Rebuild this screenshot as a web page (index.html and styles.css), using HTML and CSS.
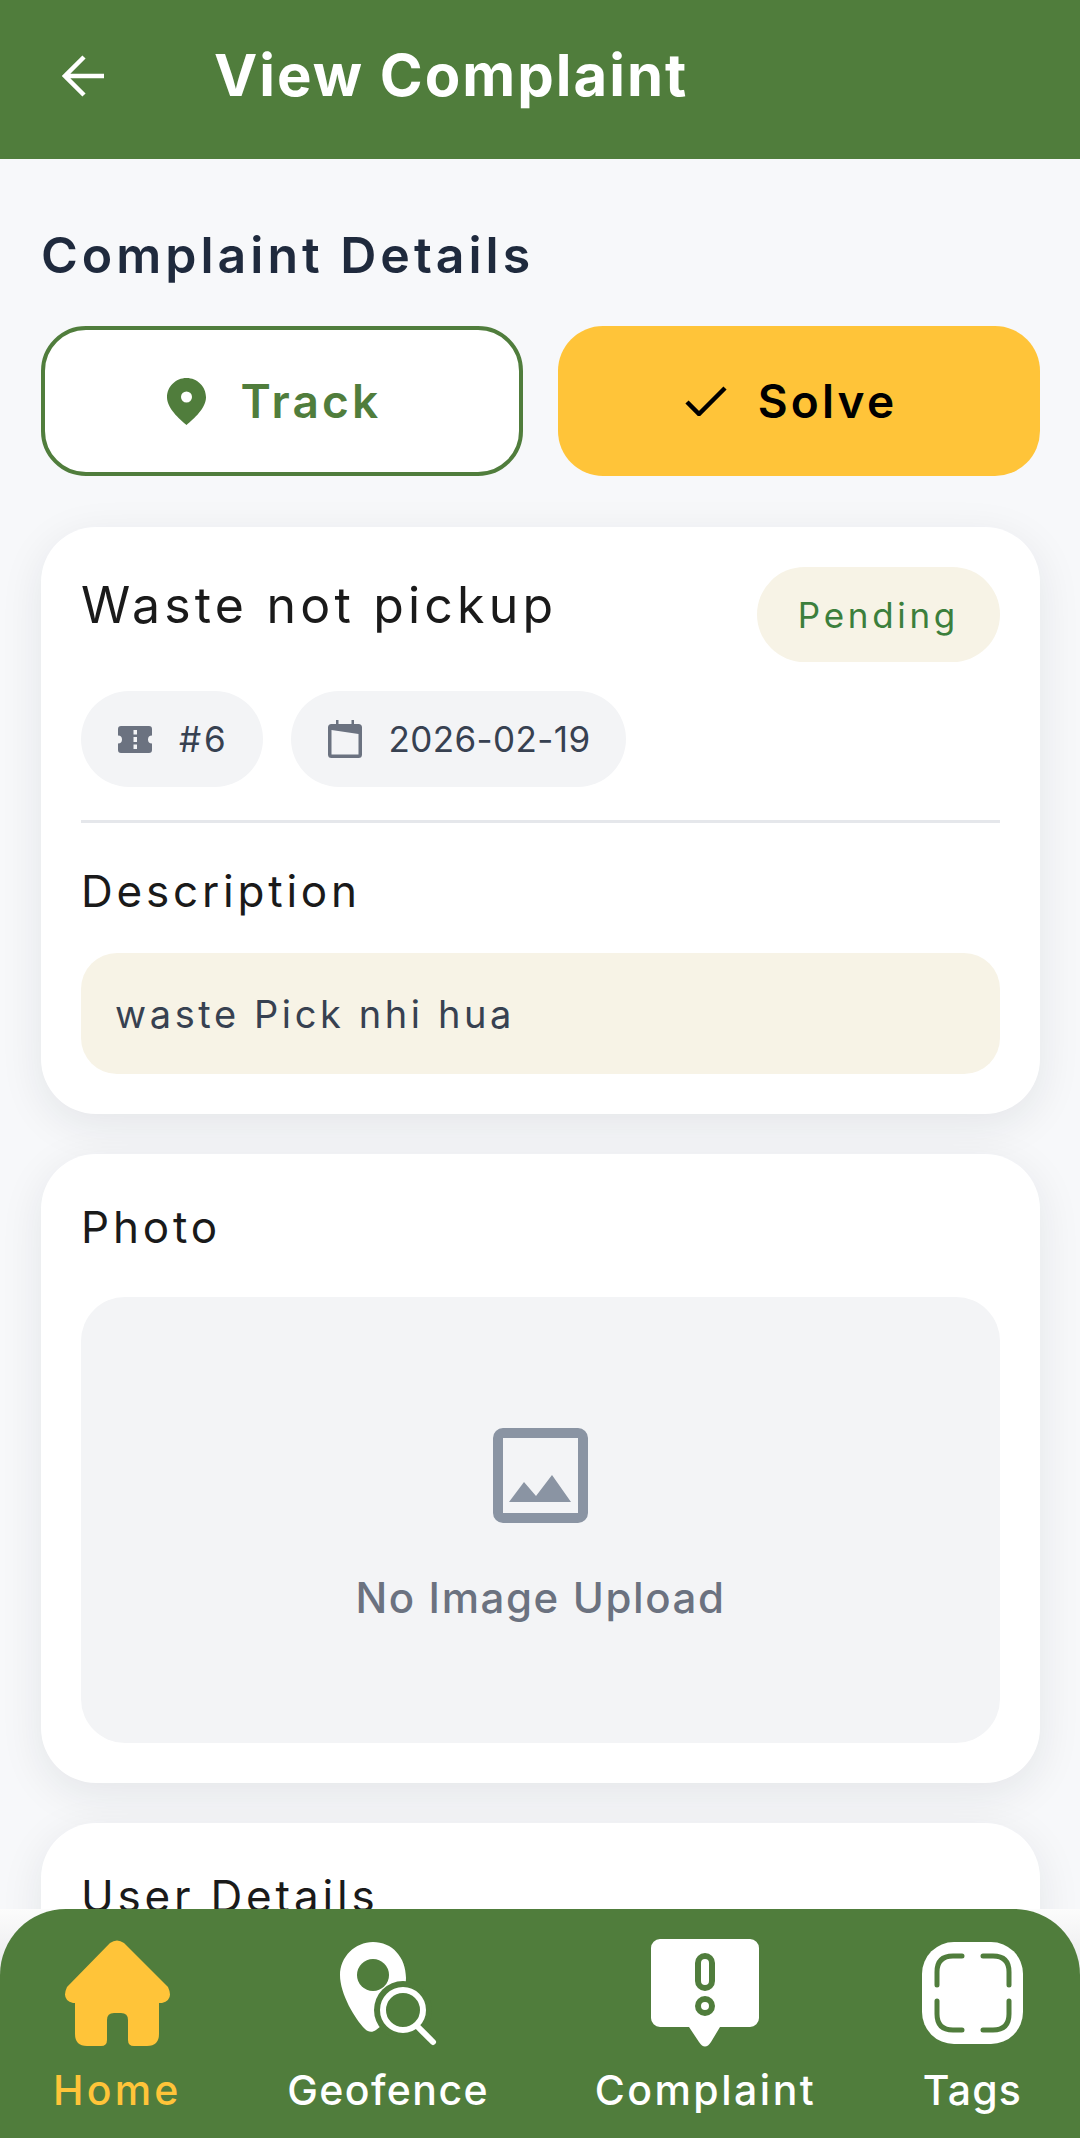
FILE: index.html
```html
<!DOCTYPE html>
<html lang="en">
<head>
<meta charset="utf-8">
<title>View Complaint</title>
<link rel="stylesheet" href="styles.css">
</head>
<body>
<div class="screen">
  <header class="appbar">
    <svg class="back" viewBox="0 0 44 42"><path d="M42 21H3M22 2 3 21l19 19" fill="none" stroke="#fff" stroke-width="4.500"/></svg>
    <h1 class="appbar-title">View Complaint</h1>
  </header>
  <main class="content">
    <h2 class="section-title">Complaint Details</h2>
    <div class="actions">
      <button class="btn btn-track">
        <svg class="btn-pin" viewBox="0 0 39 47"><path fill-rule="evenodd" d="M19.5 0C8.7 0 0 8.6 0 19.3 0 30 12 41 19.5 47 27 41 39 30 39 19.3 39 8.6 30.3 0 19.5 0Zm0 24.500a5.500 5.500 0 1 1 0-11 5.500 5.500 0 0 1 0 11Z" fill="#507d3c"/></svg>
        <span class="btn-text">Track</span>
      </button>
      <button class="btn btn-solve">
        <svg class="btn-check" viewBox="0 0 42 30"><path d="M2 16 14 28 40 2" fill="none" stroke="#000" stroke-width="4.500"/></svg>
        <span class="btn-text">Solve</span>
      </button>
    </div>

    <section class="card">
      <div class="card-top">
        <h3 class="complaint-name">Waste not pickup</h3>
        <span class="status">Pending</span>
      </div>
      <div class="chips">
        <div class="chip">
          <svg class="chip-ticket" viewBox="0 0 34 27"><path fill-rule="evenodd" d="M3 0h28a3 3 0 0 1 3 3v6.500a4 4 0 0 0 0 8V24a3 3 0 0 1-3 3H3a3 3 0 0 1-3-3v-6.500a4 4 0 0 0 0-8V3a3 3 0 0 1 3-3Zm12.500 4v4.500h3.500V4Zm0 7v5h3.500v-5Zm0 7.500V23h3.500v-4.500Z" fill="#6b7280"/></svg>
          <span class="chip-text">#6</span>
        </div>
        <div class="chip">
          <svg class="chip-cal" viewBox="0 0 34 38"><path fill-rule="evenodd" d="M8 0h2.500v4h13V0H26v4h4.500A3.500 3.500 0 0 1 34 7.500V34.500a3.500 3.500 0 0 1-3.500 3.500h-27A3.500 3.500 0 0 1 0 34.500V7.500A3.500 3.500 0 0 1 3.500 4H8Zm-4.500 10V34.500h27V14Z" fill="#6b7280"/></svg>
          <span class="chip-text chip-date">2026-02-19</span>
        </div>
      </div>
      <div class="divider"></div>
      <h3 class="label label-desc">Description</h3>
      <div class="desc-box">waste Pick nhi hua</div>
    </section>

    <section class="card">
      <h3 class="label">Photo</h3>
      <div class="photo">
        <svg class="photo-icon" viewBox="0 0 95 95"><rect x="5" y="5" width="85" height="85" rx="5" fill="none" stroke="#8a94a3" stroke-width="10"/><path d="M16 74 31 54 43 68 59 47 78 74Z" fill="#8a94a3"/></svg>
        <p class="photo-text">No Image Upload</p>
      </div>
    </section>

    <section class="card">
      <h3 class="label">User Details</h3>
    </section>
  </main>

  <div class="nav-wrap">
    <nav class="nav">
      <div class="nav-item nav-active">
        <svg class="nav-icon" width="107" height="106" viewBox="0 0 107 106"><path d="M46 3Q53-2 60 3L104 47Q110 60 98 63H95V94Q95 106 83 106H70Q64 106 64 100V80Q64 73 57 73H50Q43 73 43 80V100Q43 106 37 106H23Q11 106 11 94V63H9Q-3 60 3 47Z" fill="#ffc439"/></svg>
        <span class="nav-label label-home">Home</span>
      </div>
      <div class="nav-item">
        <svg class="nav-icon" width="97" height="102" viewBox="0 0 97 102"><path d="M33 0C52 0 66 15 66 36 66 60 44 83 36 88 32 91 28 90 25 87 15 77 0 52 0 33 0 15 15 0 33 0Z" fill="#fff"/><circle cx="33" cy="33" r="16" fill="#507d3c"/><circle cx="63" cy="68" r="29" fill="#507d3c"/><circle cx="63" cy="68" r="20" fill="none" stroke="#fff" stroke-width="6"/><path d="M78 85 93 100" stroke="#fff" stroke-width="6" stroke-linecap="round"/></svg>
        <span class="nav-label label-geo">Geofence</span>
      </div>
      <div class="nav-item">
        <svg class="nav-icon" width="108" height="108" viewBox="0 0 108 108"><path d="M9 0H99A9 9 0 0 1 108 9V79A9 9 0 0 1 99 88H69L60 103Q54 112 48 103L38 88H9A9 9 0 0 1 0 79V9A9 9 0 0 1 9 0Z" fill="#fff"/><rect x="47" y="17" width="14" height="32" rx="7" fill="#fff" stroke="#507d3c" stroke-width="6"/><circle cx="54" cy="67" r="7" fill="#fff" stroke="#507d3c" stroke-width="6"/></svg>
        <span class="nav-label label-complaint">Complaint</span>
      </div>
      <div class="nav-item">
        <svg class="nav-icon" width="101" height="102" viewBox="0 0 101 102"><rect width="101" height="102" rx="32" fill="#fff"/><path d="M15 43V30Q15 14 31 14H40M61 14H71Q87 14 87 30V43M15 59V72Q15 88 31 88H40M61 88H71Q87 88 87 72V59" fill="none" stroke="#507d3c" stroke-width="5" stroke-linecap="round"/></svg>
        <span class="nav-label label-tags">Tags</span>
      </div>
    </nav>
  </div>
</div>
</body>
</html>
```
FILE: styles.css
```css
* { box-sizing: border-box; }
html, body { margin: 0; padding: 0; }
body { font-family: Inter, "Noto Sans", sans-serif; background: #f7f8fa; }
h1, h2, h3, p { margin: 0; font-weight: 500; }

.screen { position: relative; width: 1080px; height: 2138px; overflow: hidden; background: #f7f8fa; }

.appbar { height: 159px; background: #507d3c; display: flex; align-items: flex-start; }
.back { width: 44px; height: 42px; margin: 55px 0 0 62px; flex: none; }
.appbar-title { margin: 38px 0 0 108px; font-size: 58px; line-height: 74px; font-weight: 700; color: #fff; letter-spacing: 2px; }

.content { padding: 0 40px 0 41px; }
.section-title { margin-top: 66px; font-size: 50px; line-height: 60px; font-weight: 600; color: #1f2a3d; letter-spacing: 4px; }

.actions { display: grid; grid-template-columns: 1fr 1fr; gap: 35px; margin-top: 41px; }
.btn { height: 150px; border-radius: 45px; border: 0; display: flex; align-items: center; justify-content: center; padding: 0 16px 0 0; font-family: inherit; }
.btn-track { background: #fff; border: 4px solid #507d3c; color: #507d3c; }
.btn-solve { background: #ffc439; color: #000; }
.btn-text { font-size: 46px; line-height: 60px; font-weight: 600; letter-spacing: 3.2px; }
.btn-pin { width: 39px; height: 47px; margin-right: 35px; }
.btn-check { width: 42px; height: 30px; margin-right: 31px; }

.card { background: #fff; border-radius: 55px; padding: 40px; margin-top: 40px; box-shadow: 0 11px 44px rgba(20, 30, 45, 0.085); }
.actions + .card { margin-top: 51px; }
.card-top { display: flex; justify-content: space-between; align-items: flex-start; }
.complaint-name { font-size: 50px; line-height: 76px; font-weight: 400; color: #1a1a1a; letter-spacing: 4.200px; }
.status { height: 95px; padding: 0 41px; border-radius: 48px; background: #f7f3e6; color: #3c7f3c; font-size: 35px; line-height: 97px; letter-spacing: 3.7px; font-weight: 400; }

.chips { display: flex; gap: 28px; margin-top: 29px; }
.chip { height: 96px; border-radius: 48px; background: #f3f4f6; display: flex; align-items: center; padding: 0 35px 0 37px; color: #374151; }
.chip-text { font-size: 35px; line-height: 50px; letter-spacing: 2.800px; }
.chip-date { letter-spacing: 0.400px; }
.chip-ticket { width: 34px; height: 27px; margin-right: 27px; }
.chip-cal { width: 34px; height: 38px; margin-right: 26px; }

.divider { height: 3px; margin-top: 33px; background: #e5e7eb; }
.label { font-size: 44px; line-height: 66px; font-weight: 400; color: #1a1a1a; letter-spacing: 3.800px; }
.label-desc { margin-top: 35px; }
.desc-box { margin-top: 29px; height: 121px; padding: 0 34px; border-radius: 36px; background: #f7f3e6; color: #374151; font-size: 38px; line-height: 123px; letter-spacing: 3.600px; }

.photo { margin-top: 37px; height: 446px; border-radius: 44px; background: #f3f4f6; display: flex; flex-direction: column; align-items: center; justify-content: center; padding-top: 16px; }
.photo-icon { width: 95px; height: 95px; }
.photo-text { margin-top: 45px; font-size: 42px; line-height: 60px; font-weight: 500; color: #6b7280; letter-spacing: 1.600px; }

.nav-wrap { position: absolute; left: 0; right: 0; bottom: 0; height: 229px; background: linear-gradient(to bottom, #fcfcfc, #e9e9eb 66px); }
.nav { height: 229px; border-radius: 66px 66px 0 0; background: #507d3c; display: flex; justify-content: space-between; padding: 30px 57px 0 53px; }
.nav-item { display: flex; flex-direction: column; align-items: center; color: #fff; }
.nav-active { color: #ffc439; }
.nav-icon { height: 108px; }
.nav-label { margin-top: 13px; font-size: 41px; line-height: 60px; font-weight: 500; letter-spacing: 2px; }
.label-home { letter-spacing: 3.200px; }
.label-geo { letter-spacing: 1.400px; }
.label-complaint { letter-spacing: 2.500px; }
.label-tags { letter-spacing: 1.200px; }
```
